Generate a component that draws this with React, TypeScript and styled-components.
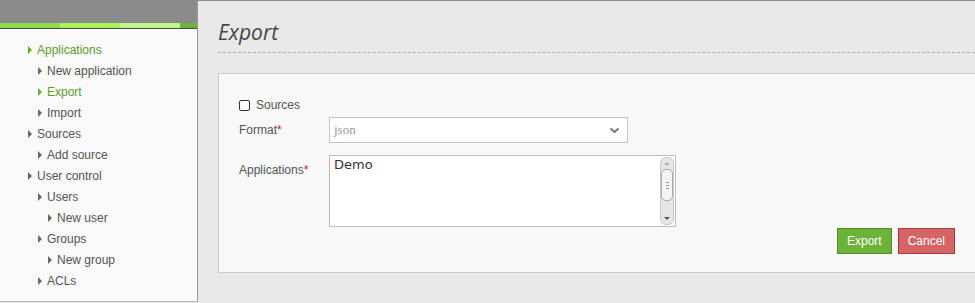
import styled, { createGlobalStyle } from 'styled-components'

const GlobalStyle = createGlobalStyle`
  html, body {
    margin: 0;
    padding: 0;
    background: #e6e6e6;
  }
  body {
    font-family: 'Liberation Sans', Arial, sans-serif;
    font-size: 12px;
    color: #555;
  }
`

const Layout = styled.div`
  display: flex;
  align-items: flex-start;
  width: 975px;
  height: 303px;
  overflow: hidden;
  border-top: 1px solid #8a8a8a;
  box-sizing: border-box;
  background: #e8e8e8;
`

// Sidebar
const Sidebar = styled.aside`
  width: 197px;
  flex-shrink: 0;
  border-right: 1px solid #9a9a9a;
  border-bottom: 1px solid #b8b8b8;
  background: #f9f9f9;
  height: 300px;
  box-sizing: content-box;
`

const Brand = styled.div`
  height: 22px;
  background: #8b8b8b;
`

const Stripe = styled.div`
  display: grid;
  grid-template-columns: 60px 60px 60px 1fr;
  height: 5px;
  border-bottom: 1px solid #4a4a4a;
`

const StripeCell = styled.div<{ $c: string }>`
  background: ${({ $c }) => $c};
`

const Nav = styled.ul`
  list-style: none;
  margin: 0;
  padding: 10px 0 0 28px;
`

const NavItem = styled.li<{ $level: number; $active?: boolean }>`
  display: flex;
  align-items: center;
  height: 21px;
  padding-left: ${({ $level }) => $level * 10}px;
  color: ${({ $active }) => ($active ? '#5c9c2c' : '#555')};
  font-size: 12px;
  white-space: nowrap;
`

const Arrow = styled.span<{ $active?: boolean }>`
  width: 0;
  height: 0;
  margin-right: 5px;
  border-top: 4px solid transparent;
  border-bottom: 4px solid transparent;
  border-left: 4px solid ${({ $active }) => ($active ? '#6aab33' : '#666')};
`

// Main
const Main = styled.main`
  flex: 1;
  padding: 0 0 0 20px;
  min-width: 0;
`

const Title = styled.h1`
  margin: 0;
  padding: 17px 0 6px;
  font-family: 'Open Sans', sans-serif;
  font-style: italic;
  font-weight: 400;
  font-size: 21px;
  line-height: 28px;
  color: #474747;
  border-bottom: 1px dashed #b0b0b0;
`

const Panel = styled.section`
  margin-top: 20px;
  width: 762px;
  height: 200px;
  border: 1px solid #c8c8c8;
  background: #f8f8f8;
  box-sizing: border-box;
  padding: 24px 0 0 20px;
  position: relative;
`

const CheckRow = styled.label`
  display: flex;
  align-items: center;
  gap: 6px;
  height: 14px;
  margin-bottom: 5px;
  color: #555;
`

const CheckBox = styled.span`
  width: 9px;
  height: 9px;
  border: 1px solid #333;
  border-radius: 2px;
  background: #fff;
`

const FieldRow = styled.div`
  display: grid;
  grid-template-columns: 90px auto;
  align-items: start;
  margin-bottom: 12px;
`

const Label = styled.span<{ $offset: number }>`
  padding-top: ${({ $offset }) => $offset}px;
  color: #555;
`

const Req = styled.span`
  color: #b22;
`

const Select = styled.div`
  display: flex;
  align-items: center;
  justify-content: space-between;
  width: 299px;
  height: 26px;
  box-sizing: border-box;
  padding: 0 7px 0 4px;
  border: 1px solid #c4c4c4;
  background: #fff;
  font-family: 'Liberation Serif', serif;
  font-size: 13px;
  color: #999;
`

const ListBox = styled.div`
  display: flex;
  width: 347px;
  height: 72px;
  box-sizing: border-box;
  border: 1px solid #bcbcbc;
  background: #fff;
`

const ListOptions = styled.div`
  flex: 1;
  padding: 1px 4px 0;
  font-family: 'DejaVu Sans', sans-serif;
  font-size: 13px;
  color: #333;
`

const Scrollbar = styled.div`
  width: 12px;
  margin: 1px 1px 1px 0;
  border: 1px solid #c8c8c8;
  border-radius: 6px;
  background: #e6e6e6;
  display: flex;
  flex-direction: column;
  align-items: center;
`

const ScrollArrow = styled.span<{ $down?: boolean }>`
  width: 0;
  height: 0;
  margin: 4px 0;
  border-left: 3px solid transparent;
  border-right: 3px solid transparent;
  ${({ $down }) => ($down ? 'border-top: 3px solid #555;' : 'border-bottom: 3px solid #aaa;')}
`

const Thumb = styled.div`
  width: 10px;
  height: 30px;
  border: 1px solid #aaa;
  border-radius: 5px;
  background: #f4f4f4;
  display: flex;
  flex-direction: column;
  align-items: center;
  justify-content: center;
  gap: 2px;
  margin-bottom: auto;
`

const Grip = styled.span`
  width: 3px;
  height: 1px;
  background: #999;
`

const Actions = styled.div`
  position: absolute;
  right: 24px;
  bottom: 18px;
  display: flex;
  gap: 6px;
`

const Button = styled.button<{ $variant: 'primary' | 'danger' }>`
  height: 26px;
  padding: 0 9px;
  border: 1px solid ${({ $variant }) => ($variant === 'primary' ? '#4f8e26' : '#a93a3a')};
  background: ${({ $variant }) => ($variant === 'primary' ? '#6db33a' : '#d56464')};
  color: #fff;
  font-family: 'Liberation Sans', Arial, sans-serif;
  font-size: 12px;
  cursor: pointer;
`

const nav = [
  { label: 'Applications', level: 0, active: true },
  { label: 'New application', level: 1 },
  { label: 'Export', level: 1, active: true },
  { label: 'Import', level: 1 },
  { label: 'Sources', level: 0 },
  { label: 'Add source', level: 1 },
  { label: 'User control', level: 0 },
  { label: 'Users', level: 1 },
  { label: 'New user', level: 2 },
  { label: 'Groups', level: 1 },
  { label: 'New group', level: 2 },
  { label: 'ACLs', level: 1 },
]

export default function App() {
  return (
    <>
      <GlobalStyle />
      <Layout>
        <Sidebar>
          <Brand />
          <Stripe>
            <StripeCell $c="#8edc4a" />
            <StripeCell $c="#a8f35c" />
            <StripeCell $c="#c0f58c" />
            <StripeCell $c="#6cb43a" />
          </Stripe>
          <Nav>
            {nav.map((n) => (
              <NavItem key={n.label} $level={n.level} $active={n.active}>
                <Arrow $active={n.active} />
                {n.label}
              </NavItem>
            ))}
          </Nav>
        </Sidebar>
        <Main>
          <Title>Export</Title>
          <Panel>
            <CheckRow>
              <CheckBox />
              Sources
            </CheckRow>
            <FieldRow>
              <Label $offset={6}>
                Format<Req>*</Req>
              </Label>
              <Select>
                json
                <svg width="11" height="7" viewBox="0 0 11 7">
                  <path d="M1.5 1.5 L5.5 5 L9.5 1.5" fill="none" stroke="#777" strokeWidth="2" />
                </svg>
              </Select>
            </FieldRow>
            <FieldRow>
              <Label $offset={8}>
                Applications<Req>*</Req>
              </Label>
              <ListBox>
                <ListOptions>Demo</ListOptions>
                <Scrollbar>
                  <ScrollArrow />
                  <Thumb>
                    <Grip />
                    <Grip />
                    <Grip />
                  </Thumb>
                  <ScrollArrow $down />
                </Scrollbar>
              </ListBox>
            </FieldRow>
            <Actions>
              <Button $variant="primary">Export</Button>
              <Button $variant="danger">Cancel</Button>
            </Actions>
          </Panel>
        </Main>
      </Layout>
    </>
  )
}
